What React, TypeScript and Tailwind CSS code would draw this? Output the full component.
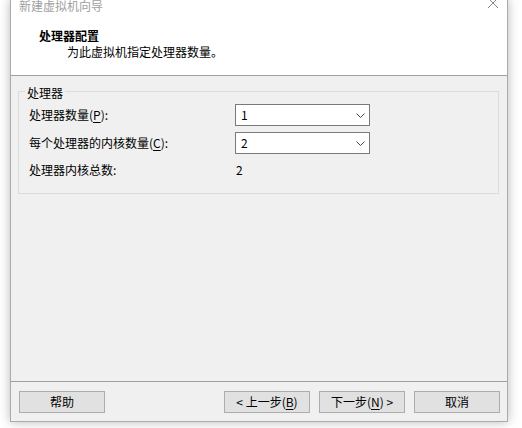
import type { ReactNode } from "react";

// underlined access-key letter, like (P) / (C) / (B) / (N)
function Key({ children }: { children: ReactNode }) {
  return <span className="underline underline-offset-[2px]">{children}</span>;
}

function Combo({ value }: { value: string }) {
  return (
    <div className="flex h-[22px] w-[135px] items-center justify-between border border-[#7a7a7a] bg-white pl-[5px] pr-[4px]">
      <span>{value}</span>
      <svg width="9" height="5" viewBox="0 0 9 5">
        <path d="M0.5 0.5 L4.5 4.5 L8.5 0.5" fill="none" stroke="#444" strokeWidth="1" />
      </svg>
    </div>
  );
}

function Button({ children }: { children: ReactNode }) {
  return (
    <button className="flex h-[22px] w-[86px] items-center justify-center border border-[#adadad] bg-[#e1e1e1] text-black">
      {children}
    </button>
  );
}

export default function App() {
  return (
    <div className="h-[428px] w-[522px] overflow-hidden bg-white font-['Noto_Sans_CJK_SC',sans-serif] text-[12px] leading-[14px] text-black">
      <div className="ml-[10px] w-[498px] border-x border-b border-[#aaaaaa] shadow-[0_0_10px_rgba(0,0,0,0.28)]">
        {/* header */}
        <div className="h-[77px] border-b border-[#a0a0a0] bg-white">
          <div className="-mt-[1px] flex h-[13px] items-start justify-between pl-[8px] pr-[8px]">
            <span className="text-[#a0a0a0]">新建虚拟机向导</span>
            <svg width="12" height="12" viewBox="0 0 12 12" className="-mt-[2px]">
              <path d="M1 1 L11 11 M11 1 L1 11" stroke="#8a8a8a" strokeWidth="1" />
            </svg>
          </div>
          <div className="mt-[17px] pl-[28px] font-bold">处理器配置</div>
          <div className="mt-[2px] pl-[56px]">为此虚拟机指定处理器数量。</div>
        </div>

        {/* body */}
        <div className="h-[305px] bg-[#f0f0f0] pl-[7px] pr-[8px] pt-[15px]">
          <div className="relative border border-[#dcdcdc] pb-[12px] pl-[10px] pt-[12px]">
            <span className="absolute -top-[6px] left-[6px] bg-[#f0f0f0] px-[2px]">处理器</span>
            <div className="flex flex-col gap-[6px]">
              <div className="flex items-center">
                <span className="w-[206px]">
                  处理器数量(<Key>P</Key>):
                </span>
                <Combo value="1" />
              </div>
              <div className="flex items-center">
                <span className="w-[206px]">
                  每个处理器的内核数量(<Key>C</Key>):
                </span>
                <Combo value="2" />
              </div>
              <div className="-mt-[1px] flex h-[22px] items-center">
                <span className="w-[206px]">处理器内核总数:</span>
                <span className="pl-[1px]">2</span>
              </div>
            </div>
          </div>
        </div>

        {/* footer */}
        <div className="flex h-[40px] items-start border-t border-[#a0a0a0] bg-[#f0f0f0] pl-[8px] pr-[7px] pt-[9px]">
          <Button>帮助</Button>
          <div className="ml-auto flex gap-[9px]">
            <Button>
              &lt; 上一步(<Key>B</Key>)
            </Button>
            <Button>
              下一步(<Key>N</Key>) &gt;
            </Button>
            <Button>取消</Button>
          </div>
        </div>
      </div>
    </div>
  );
}
